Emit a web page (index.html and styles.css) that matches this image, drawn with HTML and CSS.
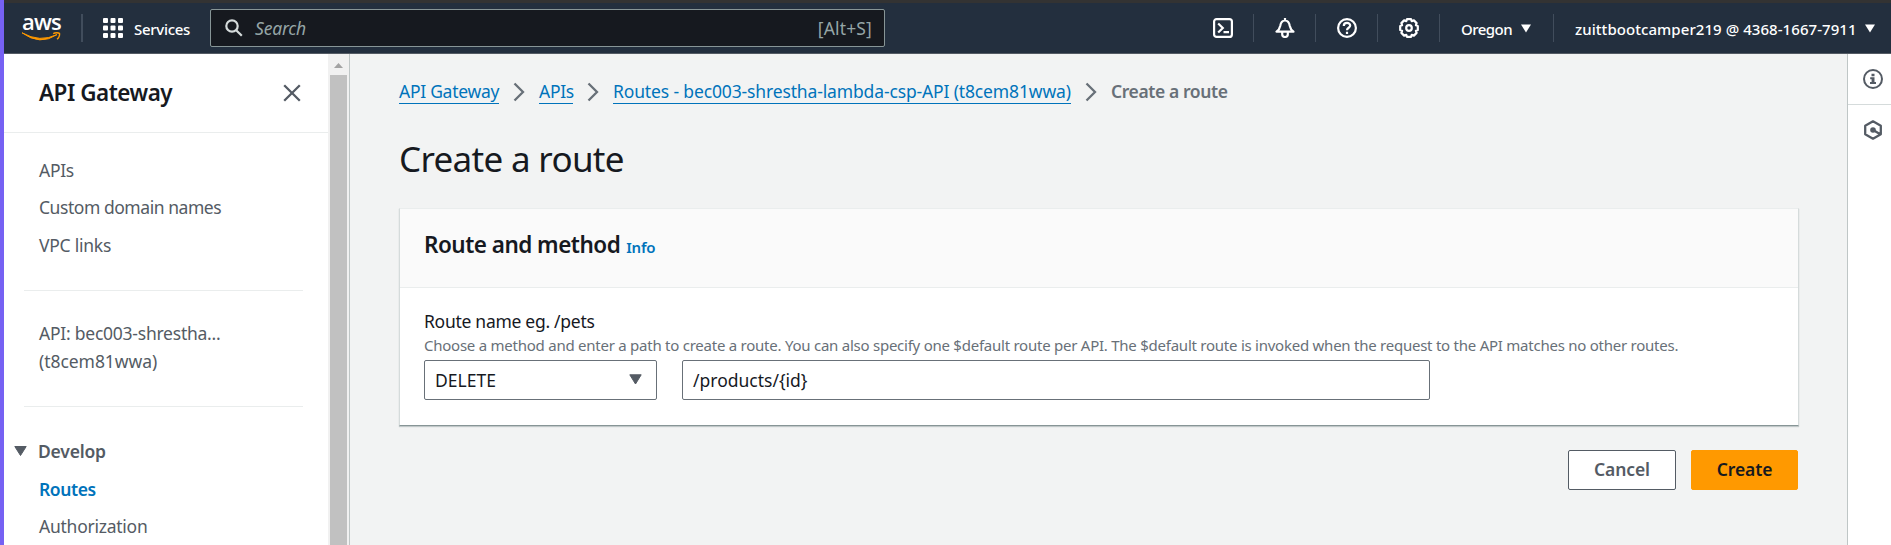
FILE: index.html
```html
<!DOCTYPE html>
<html lang="en">
<head>
<meta charset="utf-8">
<title>API Gateway - Create a route</title>
<link rel="stylesheet" href="styles.css">
</head>
<body>
<div class="app">
  <header class="topbar">
    <a class="logo">
      <span class="logo-word">aws</span>
      <svg class="logo-smile" width="41" height="11" viewBox="0 0 41 11"><path d="M1 .8Q19 11 36 2.600Q19 14 1 .8z" fill="#f90" stroke="#f90" stroke-width="1"/><path d="M32.200 1.700c2-1.200 5.200-1.100 6.200-.4.5 1.600-.7 4.600-2.300 6" fill="none" stroke="#f90" stroke-width="1.500"/></svg>
    </a>
    <span class="rule rule-logo"></span>
    <svg class="grid-icon" width="20" height="20" viewBox="0 0 20 20" fill="#fff"><rect width="5" height="5" rx="1"/><rect x="7.500" width="5" height="5" rx="1"/><rect x="15" width="5" height="5" rx="1"/><rect y="7.500" width="5" height="5" rx="1"/><rect x="7.500" y="7.500" width="5" height="5" rx="1"/><rect x="15" y="7.500" width="5" height="5" rx="1"/><rect y="15" width="5" height="5" rx="1"/><rect x="7.500" y="15" width="5" height="5" rx="1"/><rect x="15" y="15" width="5" height="5" rx="1"/></svg>
    <span class="services">Services</span>
    <div class="search">
      <svg width="18" height="18" viewBox="0 0 18 18" fill="none" stroke="#d5dbdb" stroke-width="2.200"><circle cx="7" cy="7" r="5.700"/><path d="M11.200 11.200l5.600 5.600"/></svg>
      <span class="search-hint">Search</span>
      <span class="search-key">[Alt+S]</span>
    </div>
    <div class="tools">
      <span class="tool"><svg width="20" height="20" viewBox="0 0 20 20" fill="none" stroke="#fff" stroke-width="2.200"><rect x="1.100" y="1.100" width="17.800" height="17.800" rx="2.500"/><path d="M5.200 5.500l4.600 4.500-4.600 4.500M10.500 14.200h5.500"/></svg></span>
      <span class="tool"><svg width="20" height="20" viewBox="0 0 20 20" fill="none" stroke="#fff" stroke-width="2.200" stroke-linejoin="round"><path d="M1.500 13.700h17c-2.500-1.700-3.200-3.200-3.700-5.700C14.200 4.500 13 2.500 10 2.500S5.800 4.500 5.200 8c-.5 2.500-1.200 4-3.700 5.700zM10 0v3M7.200 14.500v1.700a2.800 2.800 0 0 0 5.600 0v-1.700"/></svg></span>
      <span class="tool"><svg width="20" height="20" viewBox="0 0 20 20" fill="none" stroke="#fff" stroke-width="2.200"><circle cx="10" cy="10" r="8.900"/><path d="M6.800 7.900c0-4 6.400-3.800 6.400-.3 0 2.200-3.200 2.100-3.200 4.600M10 13.700v2.200"/></svg></span>
      <span class="tool"><svg width="20" height="20" viewBox="0 0 20 20" fill="none" stroke="#fff" stroke-width="2.200" stroke-linejoin="round"><path d="M8 1.200h4l.7 1.900 2.200-.7 2.700 2.700-.7 2.200 1.900.7v4l-1.900.7.7 2.200-2.700 2.700-2.200-.7-.7 1.900H8l-.7-1.900-2.200.7-2.700-2.700.7-2.200-1.900-.7V8l1.900-.7-.7-2.200 2.700-2.700 2.200.7z"/><circle cx="10" cy="10" r="2.800"/></svg></span>
    </div>
    <span class="region">Oregon</span>
    <svg class="caret" width="10" height="9" viewBox="0 0 10 9"><path d="M0 .5h10L5 8.500z" fill="#fff"/></svg>
    <span class="rule rule-user"></span>
    <span class="account">zuittbootcamper219 @ 4368-1667-7911</span>
    <svg class="caret" width="10" height="9" viewBox="0 0 10 9"><path d="M0 .5h10L5 8.500z" fill="#fff"/></svg>
  </header>
  <div class="body">
    <aside class="sidebar">
      <div class="side-head">
        <h2>API Gateway</h2>
        <svg width="18" height="18" viewBox="0 0 18 18" stroke="#545b64" stroke-width="2.300"><path d="M1.200 1.200l15.600 15.600M16.800 1.200L1.200 16.800"/></svg>
      </div>
      <nav>
        <a class="item t-apis">APIs</a>
        <a class="item t-custom">Custom domain names</a>
        <a class="item t-vpc">VPC links</a>
        <hr>
        <div class="api-name"><span>API: bec003-shrestha...</span><span class="api-id">(t8cem81wwa)</span></div>
        <hr>
        <div class="group"><svg width="13" height="10" viewBox="0 0 13 10"><path d="M.8.5h11.400L6.500 9.500z" fill="#545b64" stroke="#545b64" stroke-linejoin="round"/></svg>Develop</div>
        <a class="item active">Routes</a>
        <a class="item t-auth">Authorization</a>
      </nav>
    </aside>
    <div class="scrollbar"><svg width="9" height="5" viewBox="0 0 9 5"><path d="M0 5L4.500 0 9 5z" fill="#a3a3a3"/></svg><span class="thumb"></span></div>
    <main class="main">
      <nav class="crumbs">
        <a class="c-gateway">API Gateway</a>
        <svg width="12" height="20" viewBox="0 0 12 20"><path d="M1.500 1.500L10 10l-8.500 8.500" /></svg>
        <a class="c-apis">APIs</a>
        <svg width="12" height="20" viewBox="0 0 12 20"><path d="M1.500 1.500L10 10l-8.500 8.500" /></svg>
        <a class="c-routes">Routes - bec003-shrestha-lambda-csp-API (t8cem81wwa)</a>
        <svg width="12" height="20" viewBox="0 0 12 20"><path d="M1.500 1.500L10 10l-8.500 8.500" /></svg>
        <b>Create a route</b>
      </nav>
      <h1>Create a route</h1>
      <section class="card">
        <header class="card-head"><h3>Route and method</h3><a>Info</a></header>
        <div class="card-body">
          <div class="label">Route name eg. /pets</div>
          <div class="help">Choose a method and enter a path to create a route. You can also specify one $default route per API. The $default route is invoked when the request to the API matches no other routes.</div>
          <div class="fields">
            <div class="field method">DELETE<svg width="13" height="11" viewBox="0 0 13 11"><path d="M.8.8h11.400l-5.700 9.200z" fill="#545b64" stroke="#545b64" stroke-linejoin="round"/></svg></div>
            <div class="field path">/products/{id}</div>
          </div>
        </div>
      </section>
      <div class="actions">
        <button class="btn">Cancel</button>
        <button class="btn primary">Create</button>
      </div>
    </main>
    <aside class="rail">
      <div class="rail-item"><svg width="20" height="20" viewBox="0 0 20 20"><circle cx="10" cy="10" r="9" fill="none" stroke="#545b64" stroke-width="2"/><path d="M8.500 4.700h3v2.600h-3zM7.200 8.300h4.300v4.600H13v2H7v-2h1.600v-2.700H7.200z" fill="#545b64"/></svg></div>
      <div class="rail-item second"><svg width="20" height="20" viewBox="0 0 20 20"><path d="M10 1.300l7.800 4.400v8.600L10 18.700l-7.800-4.400V5.700zM10.500 10.200l6.800 4" fill="none" stroke="#545b64" stroke-width="2.300" stroke-linejoin="round"/><circle cx="10" cy="10" r="2.800" fill="#545b64"/></svg></div>
    </aside>
  </div>
</div>
</body>
</html>
```
FILE: styles.css
```css
* { box-sizing: border-box; }
body {
  margin: 0;
  font-family: "Noto Sans", "Open Sans", sans-serif;
  font-size: 17.5px;
  color: #16191f;
}
h1, h2, h3 { margin: 0; }
svg { display: block; flex: none; }

.app {
  display: flex;
  flex-direction: column;
  height: 545px;
  overflow: hidden;
  border-left: 4px solid #7661f3;
}

.topbar {
  display: flex;
  align-items: center;
  flex: none;
  height: 54px;
  padding-right: 16px;
  background: #232f3e;
  border-top: 3px solid #333;
  border-bottom: 1px solid #545b64;
  color: #fff;
  font-size: 15px;
  font-weight: 500;
  white-space: nowrap;
}
.logo { width: 41px; height: 32px; margin-left: 17px; }
.logo-word {
  display: block;
  height: 20px;
  margin-left: 1px;
  font: 600 22px/18px "Open Sans", sans-serif;
  letter-spacing: -0.8px;
}
.rule { width: 1px; height: 28px; background: #414d5c; }
.rule-logo { width: 2px; margin-left: 19px; }
.grid-icon { margin-left: 20px; }
.services { width: 56px; margin-left: 11px; letter-spacing: -0.3px; padding-top: 1px; }
.search {
  display: flex;
  align-items: center;
  width: 675px;
  height: 38px;
  margin-left: 20px;
  padding: 0 12px 1px 14px;
  background: #16191f;
  border: 1px solid #879596;
  border-radius: 2px;
  color: #95a5a6;
  font-size: 17.5px;
  font-weight: 400;
}
.search-hint { margin-left: 12px; font-style: italic; letter-spacing: -0.2px; }
.search-key { margin-left: auto; letter-spacing: 0.15px; }
.tools { display: flex; margin-left: auto; }
.tool { width: 62px; height: 28px; padding: 4px 0 0 21px; border-right: 1px solid #414d5c; }
.region { width: 51px; margin-left: 21px; letter-spacing: -0.55px; padding-top: 1px; }
.caret { margin-left: 9px; }
.rule-user { margin-left: 22px; }
.account { width: 281px; margin-left: 21px; padding-top: 1px; letter-spacing: 0.06px; }

.body { display: flex; flex: 1; min-height: 0; }

.sidebar { flex: none; width: 324px; background: #fff; color: #545b64; }
.side-head {
  display: flex;
  align-items: center;
  justify-content: space-between;
  height: 79px;
  padding: 0 27px 1px 35px;
  border-bottom: 1px solid #eaeded;
}
.side-head h2 { font-size: 22.5px; font-weight: 600; letter-spacing: -0.5px; color: #16191f; }
.sidebar nav { padding-top: 19px; white-space: nowrap; }
.item { display: block; height: 37.3px; padding-left: 35px; line-height: 37.3px; }
.t-apis { letter-spacing: -0.3px; }
.t-custom { letter-spacing: -0.45px; }
.t-vpc { letter-spacing: -0.25px; }
.t-auth { letter-spacing: -0.25px; }
.active { color: #0073bb; font-weight: 600; letter-spacing: -0.4px; }
.sidebar hr { height: 1px; margin: 26px 25px 28px 20px; border: 0; background: #eaeded; }
.api-name { padding-left: 35px; line-height: 28px; letter-spacing: -0.24px; }
.api-name span { display: block; }
.api-name .api-id { letter-spacing: -0.05px; }
.api-name + hr { margin: 31px 25px 30px 20px; }
.group {
  display: flex;
  align-items: center;
  gap: 11px;
  height: 28px;
  margin-bottom: 6px;
  padding-left: 10px;
  font-weight: 600;
  letter-spacing: -0.2px;
}

.scrollbar {
  display: flex;
  flex-direction: column;
  align-items: center;
  flex: none;
  width: 22px;
  padding: 9px 1px 0 0;
  background: #f1f1f1;
  border-right: 1px solid #bfc6c6;
}
.thumb { flex: 1; width: 17px; margin-top: 7px; background: #c1c1c1; }

.main { flex: 1; padding: 23px 48px 0 49px; background: #f2f3f3; }
.crumbs { display: flex; align-items: center; gap: 14px; height: 30px; white-space: nowrap; }
.crumbs a { line-height: 24px; height: 25px; margin-bottom: 1px; color: #0073bb; border-bottom: 1px solid #0073bb; }
.crumbs svg { fill: none; stroke: #687078; stroke-width: 2.3px; }
.crumbs b { margin-bottom: 2px; font-weight: 600; color: #687078; letter-spacing: -0.4px; }
.c-gateway { width: 100px; letter-spacing: -0.28px; }
.c-apis { width: 34px; letter-spacing: -0.3px; }
.c-routes { width: 458px; letter-spacing: -0.14px; }
h1 { margin-top: 28px; font-size: 35px; font-weight: 400; line-height: 48px; letter-spacing: -0.68px; }

.card {
  margin-top: 25px;
  background: #fff;
  border: 1px solid #d5dbdb;
  border-top-color: #eaeded;
  border-bottom-color: #879596;
  box-shadow: 0 1px 1px rgba(0, 28, 36, 0.2);
  height: 218px;
}
.card-head {
  display: flex;
  align-items: baseline;
  gap: 6px;
  height: 79px;
  padding: 20px 24px 0;
  background: #fafafa;
  border-bottom: 1px solid #eaeded;
}
.card-head h3 { font-size: 22.5px; font-weight: 600; line-height: 32px; letter-spacing: -0.52px; }
.card-head a { font-size: 15px; font-weight: 600; letter-spacing: -0.2px; color: #0073bb; }
.card-body { padding: 19px 24px 0; white-space: nowrap; }
.label { line-height: 28px; letter-spacing: -0.28px; }
.help { font-size: 15px; line-height: 20px; letter-spacing: -0.245px; color: #687078; }
.fields { display: flex; gap: 25px; margin-top: 5px; }
.field {
  display: flex;
  align-items: center;
  justify-content: space-between;
  height: 40px;
  padding: 0 14px 1px 10px;
  border: 1px solid #687078;
  border-radius: 2px;
}
.method { width: 233px; }
.path { width: 748px; }

.actions { display: flex; justify-content: flex-end; gap: 15px; margin: 24px 1px 0 0; }
.btn {
  width: 108px;
  height: 40px;
  padding: 0 0 3px;
  font: 600 17.5px "Noto Sans", sans-serif;
  letter-spacing: -0.1px;
  color: #545b64;
  background: #fff;
  border: 1px solid #545b64;
  border-radius: 2px;
}
.primary { width: 107px; color: #16191f; background: #f90; border-color: #f90; }

.rail { flex: none; width: 44px; background: #fff; border-left: 1px solid #bfc6c6; }
.rail-item { height: 51px; padding: 15px 0 0 15px; border-bottom: 1px solid #d5dbdb; }
.second { border-bottom: 0; }
```
